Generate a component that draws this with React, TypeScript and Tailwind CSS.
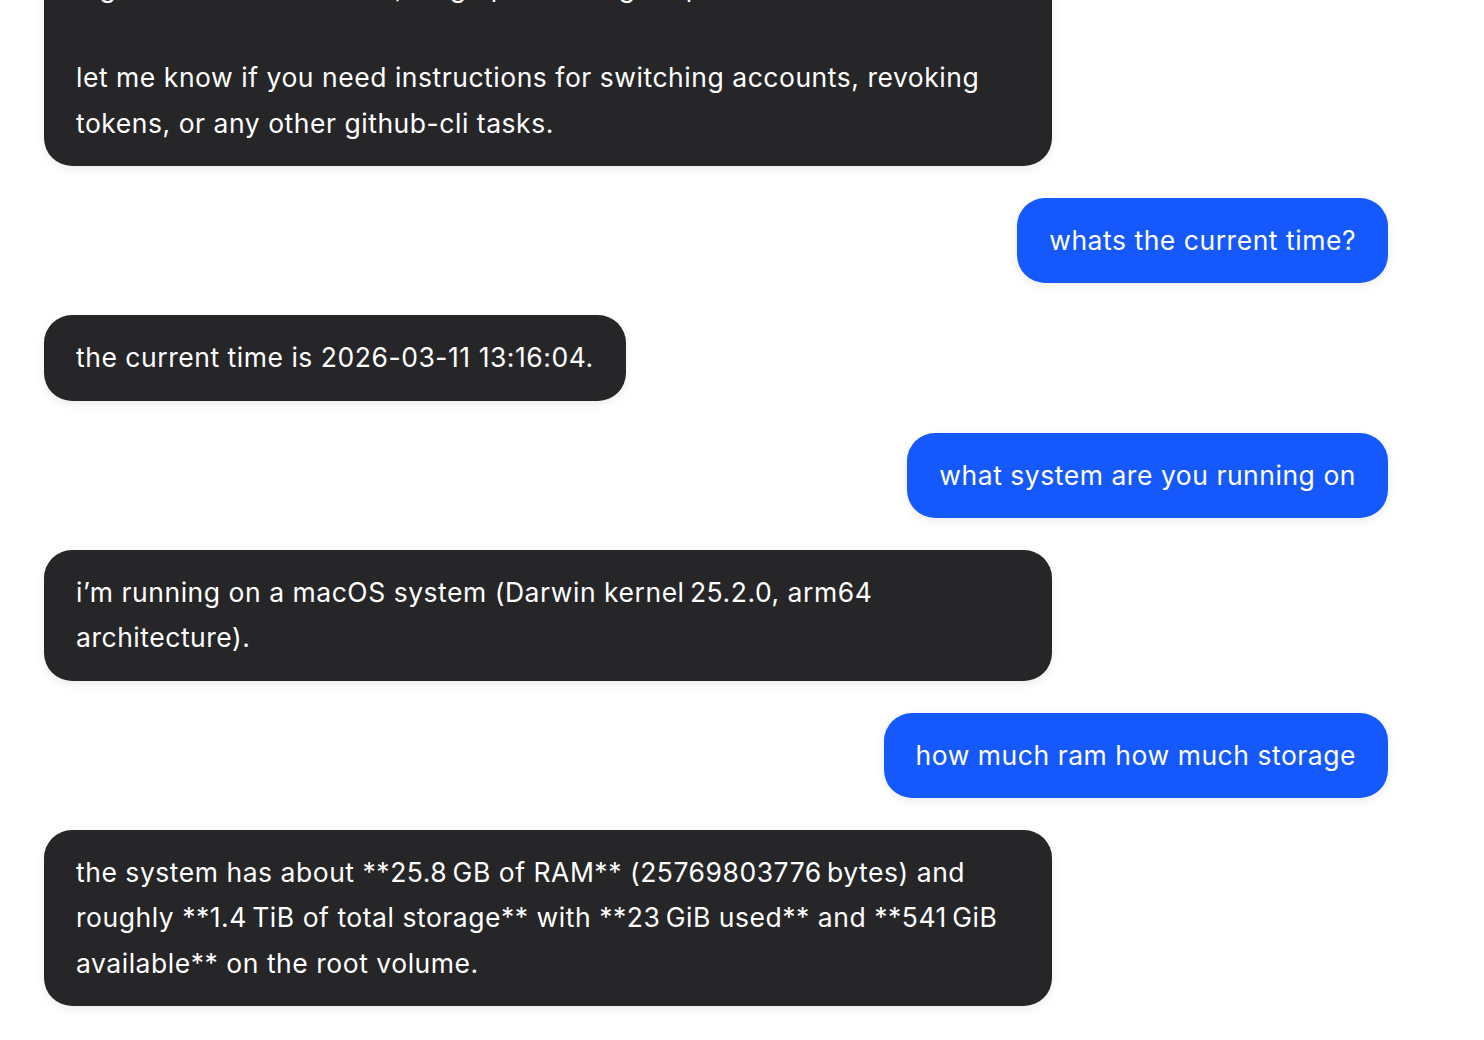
import React from 'react';

type Msg = { role: 'user' | 'assistant'; text: string[] };

const messages: Msg[] = [
  {
    role: 'assistant',
    text: [
      'a gh token is now stored, so git push and gh repo commands work.',
      'let me know if you need instructions for switching accounts, revoking tokens, or any other github-cli tasks.',
    ],
  },
  { role: 'user', text: ['whats the current time?'] },
  { role: 'assistant', text: ['the current time is 2026-03-11 13:16:04.'] },
  { role: 'user', text: ['what system are you running on'] },
  {
    role: 'assistant',
    text: ['i\u2019m running on a macOS system (Darwin kernel\u202f25.2.0, arm64 architecture).'],
  },
  { role: 'user', text: ['how much ram how much storage'] },
  {
    role: 'assistant',
    text: [
      'the system has about **25.8\u202fGB of RAM** (25769803776\u202fbytes) and roughly **1.4\u202fTiB of total storage** with **23\u202fGiB used** and **541\u202fGiB available** on the root volume.',
    ],
  },
];

const Bubble: React.FC<{ msg: Msg }> = ({ msg }) => {
  const isUser = msg.role === 'user';
  return (
    <div className={isUser ? 'flex justify-end' : 'flex justify-start'}>
      <div
        className={
          isUser
            ? 'max-w-[75%] rounded-[28px] bg-[#1559fd] px-8 py-5 text-white shadow-[0_3px_10px_rgba(0,0,0,0.08)]'
            : 'max-w-[75%] rounded-[28px] bg-[#262628] px-8 py-5 text-white shadow-[0_3px_10px_rgba(0,0,0,0.08)]'
        }
      >
        {msg.text.map((p, i) => (
          <p key={i} className={i > 0 ? 'mt-[45.34px]' : ''}>
            {p}
          </p>
        ))}
      </div>
    </div>
  );
};

export default function App() {
  return (
    <div
      className="flex h-[1040px] w-full flex-col justify-end gap-8 overflow-hidden bg-white pb-[34px] pl-[44px] pr-[96px] text-[26.5px] leading-[45.34px] tracking-[0.02em] antialiased"
      style={{ fontFamily: 'Inter, "Noto Sans", sans-serif' }}
    >
      {messages.map((m, i) => (
        <Bubble key={i} msg={m} />
      ))}
    </div>
  );
}
